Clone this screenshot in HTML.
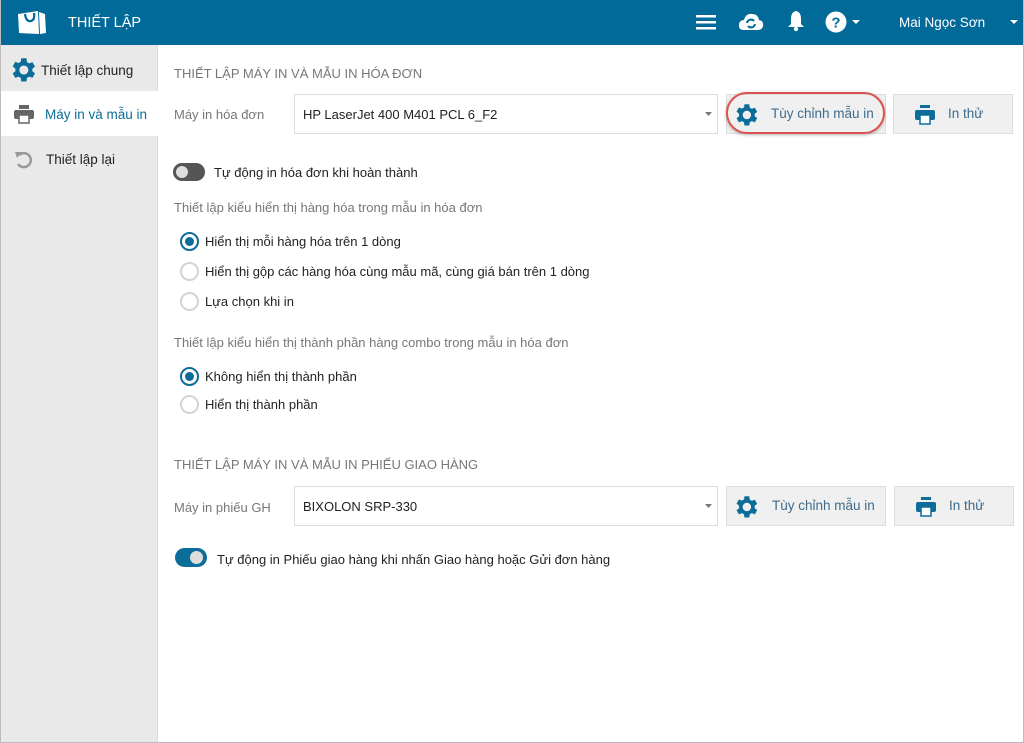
<!DOCTYPE html>
<html><head><meta charset="utf-8"><style>
*{box-sizing:border-box;margin:0;padding:0}
body{width:1024px;height:743px;overflow:hidden;background:#fff;font-family:"Liberation Sans",sans-serif;font-size:13px;color:#222;position:relative}
.a{position:absolute;white-space:nowrap}
.frame{position:absolute;left:0;top:0;width:1024px;height:743px;border:1px solid #bdbdbd;border-top:none;pointer-events:none}
.hdr{position:absolute;left:0;top:0;width:1024px;height:45px;background:#016a99;color:#fff}
.side{position:absolute;left:1px;top:45px;width:157px;height:697px;background:#e9e9e9;border-right:1px solid #dcdcdc}
.gray{color:#777}
.sel{position:absolute;left:294px;width:424px;height:40px;border:1px solid #ddd;background:#fff}
.btn{position:absolute;height:40px;border:1px solid #ddd;background:#f0f0f0;color:#3d6b8c;font-size:13.5px}
.radio{position:absolute;width:19px;height:19px;border-radius:50%;border:2px solid #d3d3d3;background:#fff}
.radio.on{border:2px solid #0c6d99}
.radio.on::after{content:"";position:absolute;left:3px;top:3px;width:9px;height:9px;border-radius:50%;background:#0c6d99}
</style></head><body>
<div class="hdr">
<svg class="a" style="left:17px;top:10px" width="30" height="25" viewBox="0 0 30 25"><path d="M1 4 L21 1 L22 24 L2 23Z" fill="#fff"/><path d="M22 2 L28 4 L29 23 L23 24Z" fill="#fff"/><path d="M8 4 Q9 12 14 11 Q18 10 17 3" stroke="#016a99" stroke-width="2.2" fill="none"/></svg>
<div class="a" style="left:68px;top:15px;font-size:14.5px">THIẾT LẬP</div>
<svg class="a" style="left:696px;top:14px" width="20" height="16"><rect x="0" y="1" width="20" height="2.5" fill="#fff"/><rect x="0" y="7" width="20" height="2.5" fill="#fff"/><rect x="0" y="13" width="20" height="2.5" fill="#fff"/></svg>
<svg class="a" style="left:738px;top:11px" width="26" height="22" viewBox="0 0 26 22"><path d="M6 19 Q0 19 1 13 Q2 9 6 9 Q8 2 14 3 Q20 3 21 9 Q26 10 25 15 Q24 19 20 19Z" fill="#fff"/><path d="M9 12 A4 4 0 0 1 16 10 M17 13 A4 4 0 0 1 10 15" stroke="#016a99" stroke-width="2" fill="none"/></svg>
<svg class="a" style="left:788px;top:10px" width="16" height="22" viewBox="0 0 16 22"><path d="M8 1 Q13 2 13 9 L13 14 L16 17 L0 17 L3 14 L3 9 Q3 2 8 1Z" fill="#fff"/><circle cx="8" cy="19" r="2.2" fill="#fff"/></svg>
<svg class="a" style="left:825px;top:11px" width="38" height="22" viewBox="0 0 38 22"><circle cx="11" cy="11" r="10.5" fill="#fff"/><text x="11" y="16.5" font-size="15" font-weight="bold" text-anchor="middle" fill="#016a99" font-family="Liberation Sans">?</text><path d="M27 9 L35 9 L31 13Z" fill="#fff"/></svg>
<div class="a" style="left:899px;top:15px;font-size:13.5px">Mai Ngọc Sơn</div>
<svg class="a" style="left:1010px;top:19px" width="9" height="6"><path d="M0 1 L8 1 L4 5Z" fill="#fff"/></svg>
</div>
<div class="side">
<div class="a" style="left:0;top:46px;width:157px;height:45px;background:#fff"></div>
<svg class="a" style="left:10px;top:12px" width="26" height="26" viewBox="3 2 20 20"><path fill="#0c6d99" d="M19.4 13a7.5 7.5 0 0 0 0-2l2.1-1.6-2-3.5-2.5 1a7.3 7.3 0 0 0-1.7-1L14.9 3h-4l-.4 2.7a7.3 7.3 0 0 0-1.7 1l-2.5-1-2 3.5L6.4 11a7.5 7.5 0 0 0 0 2l-2.1 1.6 2 3.5 2.5-1a7.3 7.3 0 0 0 1.7 1l.4 2.7h4l.4-2.7a7.3 7.3 0 0 0 1.7-1l2.5 1 2-3.5zM12.9 15.5a3.5 3.5 0 1 1 0-7 3.5 3.5 0 0 1 0 7z"/></svg>
<div class="a" style="left:40px;top:18px;font-size:13.5px">Thiết lập chung</div>
<svg class="a" style="left:13px;top:59px" width="20" height="20" viewBox="0 0 20 20"><rect x="5" y="1" width="10" height="4" fill="#666"/><rect x="0" y="6" width="20" height="9" rx="2" fill="#666"/><rect x="5" y="11" width="10" height="8" fill="#fff" stroke="#666" stroke-width="1.5"/></svg>
<div class="a" style="left:44px;top:62px;font-size:13.5px;color:#0c6d99">Máy in và mẫu in</div>
<svg class="a" style="left:14px;top:105px" width="18" height="20" viewBox="0 0 18 20"><path d="M4 5 A7 7 0 1 1 3 14" stroke="#999" stroke-width="2.5" fill="none"/><path d="M0 2 L7 2 L2 8Z" fill="#999"/></svg>
<div class="a" style="left:45px;top:107px;font-size:13.5px">Thiết lập lại</div>
</div>

<div class="a gray" style="left:174px;top:66px">THIẾT LẬP MÁY IN VÀ MẪU IN HÓA ĐƠN</div>
<div class="a gray" style="left:174px;top:107px">Máy in hóa đơn</div>
<div class="sel" style="top:94px"><div class="a" style="left:8px;top:12px">HP LaserJet 400 M401 PCL 6_F2</div><svg class="a" style="left:410px;top:17px" width="7" height="4"><path d="M0 0L7 0L3.5 4Z" fill="#777"/></svg></div>
<div class="btn" style="left:726px;top:94px;width:160px">
<svg class="a" style="left:8px;top:8px" width="24" height="24" viewBox="3 2 20 20"><path fill="#0c6d99" d="M19.4 13a7.5 7.5 0 0 0 0-2l2.1-1.6-2-3.5-2.5 1a7.3 7.3 0 0 0-1.7-1L14.9 3h-4l-.4 2.7a7.3 7.3 0 0 0-1.7 1l-2.5-1-2 3.5L6.4 11a7.5 7.5 0 0 0 0 2l-2.1 1.6 2 3.5 2.5-1a7.3 7.3 0 0 0 1.7 1l.4 2.7h4l.4-2.7a7.3 7.3 0 0 0 1.7-1l2.5 1 2-3.5zM12.9 15.5a3.5 3.5 0 1 1 0-7 3.5 3.5 0 0 1 0 7z"/></svg>
<div class="a" style="left:44px;top:11px">Tùy chỉnh mẫu in</div></div>
<div class="a" style="left:726px;top:92px;width:159px;height:42px;border:2px solid #d9534f;border-radius:21px;box-shadow:0 1px 3px rgba(0,0,0,.3)"></div>
<div class="btn" style="left:893px;top:94px;width:120px">
<svg class="a" style="left:21px;top:10px" width="20" height="20" viewBox="0 0 20 20"><rect x="5" y="0" width="10" height="3" fill="#0c6d99"/><rect x="0" y="5" width="20" height="10" rx="2" fill="#0c6d99"/><rect x="5" y="10" width="10" height="9" fill="#fff" stroke="#0c6d99" stroke-width="1.5"/></svg>
<div class="a" style="left:54px;top:11px">In thử</div></div>

<div class="a" style="left:173px;top:163px;width:32px;height:18px;border-radius:9px;background:#555"></div>
<div class="a" style="left:176px;top:166px;width:12px;height:12px;border-radius:50%;background:#ddd"></div>
<div class="a" style="left:214px;top:165px">Tự động in hóa đơn khi hoàn thành</div>
<div class="a gray" style="left:174px;top:200px">Thiết lập kiểu hiển thị hàng hóa trong mẫu in hóa đơn</div>
<div class="radio on" style="left:180px;top:232px"></div><div class="a" style="left:205px;top:234px">Hiển thị mỗi hàng hóa trên 1 dòng</div>
<div class="radio" style="left:180px;top:262px"></div><div class="a" style="left:205px;top:264px">Hiển thị gộp các hàng hóa cùng mẫu mã, cùng giá bán trên 1 dòng</div>
<div class="radio" style="left:180px;top:292px"></div><div class="a" style="left:205px;top:294px">Lựa chọn khi in</div>
<div class="a gray" style="left:174px;top:335px">Thiết lập kiểu hiển thị thành phần hàng combo trong mẫu in hóa đơn</div>
<div class="radio on" style="left:180px;top:367px"></div><div class="a" style="left:205px;top:369px">Không hiển thị thành phần</div>
<div class="radio" style="left:180px;top:395px"></div><div class="a" style="left:205px;top:397px">Hiển thị thành phần</div>

<div class="a gray" style="left:174px;top:457px">THIẾT LẬP MÁY IN VÀ MẪU IN PHIẾU GIAO HÀNG</div>
<div class="a gray" style="left:174px;top:500px">Máy in phiếu GH</div>
<div class="sel" style="top:486px"><div class="a" style="left:8px;top:12px">BIXOLON SRP-330</div><svg class="a" style="left:410px;top:17px" width="7" height="4"><path d="M0 0L7 0L3.5 4Z" fill="#777"/></svg></div>
<div class="btn" style="left:726px;top:486px;width:160px">
<svg class="a" style="left:8px;top:8px" width="24" height="24" viewBox="3 2 20 20"><path fill="#0c6d99" d="M19.4 13a7.5 7.5 0 0 0 0-2l2.1-1.6-2-3.5-2.5 1a7.3 7.3 0 0 0-1.7-1L14.9 3h-4l-.4 2.7a7.3 7.3 0 0 0-1.7 1l-2.5-1-2 3.5L6.4 11a7.5 7.5 0 0 0 0 2l-2.1 1.6 2 3.5 2.5-1a7.3 7.3 0 0 0 1.7 1l.4 2.7h4l.4-2.7a7.3 7.3 0 0 0 1.7-1l2.5 1 2-3.5zM12.9 15.5a3.5 3.5 0 1 1 0-7 3.5 3.5 0 0 1 0 7z"/></svg>
<div class="a" style="left:45px;top:11px">Tùy chỉnh mẫu in</div></div>
<div class="btn" style="left:894px;top:486px;width:120px">
<svg class="a" style="left:21px;top:10px" width="20" height="20" viewBox="0 0 20 20"><rect x="5" y="0" width="10" height="3" fill="#0c6d99"/><rect x="0" y="5" width="20" height="10" rx="2" fill="#0c6d99"/><rect x="5" y="10" width="10" height="9" fill="#fff" stroke="#0c6d99" stroke-width="1.5"/></svg>
<div class="a" style="left:54px;top:11px">In thử</div></div>

<div class="a" style="left:175px;top:548px;width:32px;height:19px;border-radius:10px;background:#0c6d99"></div>
<div class="a" style="left:190px;top:551px;width:13px;height:13px;border-radius:50%;background:#ddd"></div>
<div class="a" style="left:217px;top:552px">Tự động in Phiếu giao hàng khi nhấn Giao hàng hoặc Gửi đơn hàng</div>
<div class="frame"></div>
</body></html>
